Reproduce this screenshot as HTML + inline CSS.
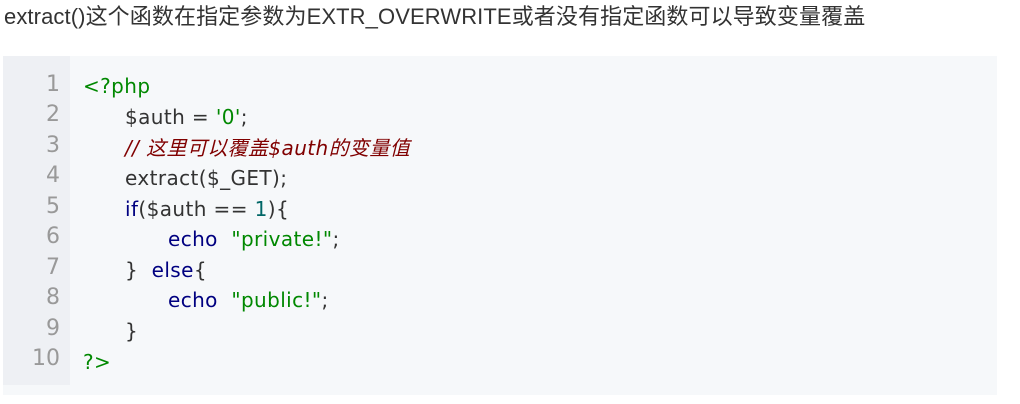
<!DOCTYPE html>
<html><head><meta charset="utf-8"><style>
body{margin:0;width:1020px;height:404px;background:#fff;overflow:hidden;font-family:"Liberation Sans","Noto Sans CJK SC",sans-serif;}
.t{position:absolute;left:4px;top:3px;font-size:22px;color:#333;line-height:28px;letter-spacing:0.1px}
.box{position:absolute;left:3px;top:56px;width:994px;height:339px;background:#f6f8fa;}
.g{position:absolute;left:0;top:0;width:67px;height:329px;background:#eef0f4;}
.n{position:absolute;right:10px;width:40px;text-align:right;font-size:22px;color:#999;line-height:30px;font-family:"DejaVu Sans",sans-serif}
.l{position:absolute;font-size:20px;line-height:30px;color:#333;white-space:pre;font-family:"DejaVu Sans","Noto Sans CJK SC",sans-serif;letter-spacing:0.4px}
.gr{color:#080}.kw{color:#000080}.cm{color:#800000;font-style:italic}.num{color:#066}
</style></head><body>
<div class="t">extract()这个函数在指定参数为EXTR_OVERWRITE或者没有指定函数可以导致变量覆盖</div>
<div class="box"><div class="g">
<div class="n" style="top:14px">1</div><div class="n" style="top:44px">2</div><div class="n" style="top:75px">3</div><div class="n" style="top:105px">4</div><div class="n" style="top:136px">5</div><div class="n" style="top:166px">6</div><div class="n" style="top:197px">7</div><div class="n" style="top:227px">8</div><div class="n" style="top:258px">9</div><div class="n" style="top:288px">10</div>
</div>
<div class="l gr" style="left:80px;top:15px">&lt;?php</div>
<div class="l" style="left:122px;top:46px">$auth = <span class="gr">'0'</span>;</div>
<div class="l cm" style="left:122px;top:77px">// 这里可以覆盖$auth的变量值</div>
<div class="l" style="left:122px;top:107px">extract($_GET);</div>
<div class="l" style="left:122px;top:138px"><span class="kw">if</span>($auth == <span class="num">1</span>){</div>
<div class="l" style="left:165px;top:168px"><span class="kw">echo</span>  <span class="gr">"private!"</span>;</div>
<div class="l" style="left:122px;top:199px">}  <span class="kw">else</span>{</div>
<div class="l" style="left:165px;top:229px"><span class="kw">echo</span>  <span class="gr">"public!"</span>;</div>
<div class="l" style="left:122px;top:260px">}</div>
<div class="l gr" style="left:80px;top:291px">?&gt;</div>
</div>
</body></html>
